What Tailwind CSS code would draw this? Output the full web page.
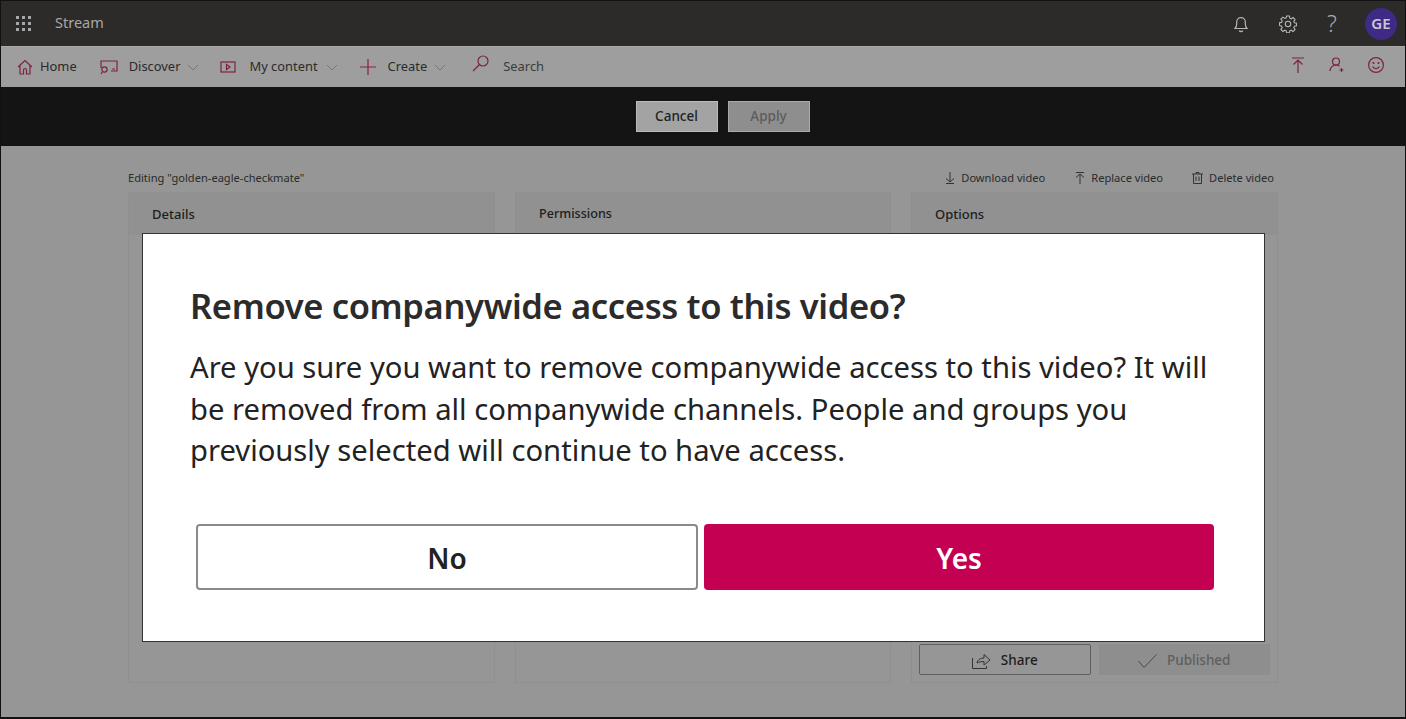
<!DOCTYPE html>
<html lang="en">
<head>
    <meta charset="UTF-8">
    <title>Stream</title>
    <script src="https://cdn.jsdelivr.net/npm/@tailwindcss/browser@4"></script>
</head>
<body class="bg-[#969696]">
<div class="relative w-[1406px] h-[719px] overflow-hidden border border-[#111] border-b-2 font-['Noto_Sans',sans-serif] flex flex-col">

    <!-- top bar -->
    <header class="h-[45px] shrink-0 bg-[#2c2b2a] flex items-center text-[#a8a8a8]">
        <svg class="ml-[15px] -mt-[2px] w-4 h-4" viewBox="0 0 16 16" fill="#a8a8a8">
            <rect x="0" y="1" width="3" height="3"/><rect x="6" y="1" width="3" height="3"/><rect x="12" y="1" width="3" height="3"/>
            <rect x="0" y="7" width="3" height="3"/><rect x="6" y="7" width="3" height="3"/><rect x="12" y="7" width="3" height="3"/>
            <rect x="0" y="13" width="3" height="3"/><rect x="6" y="13" width="3" height="3"/><rect x="12" y="13" width="3" height="3"/>
        </svg>
        <span class="ml-[23px] -mt-[2px] text-[14.5px]">Stream</span>
        <div class="ml-auto flex items-center">
            <svg class="w-4 h-[18px] -ml-[1px]" viewBox="0 0 16 18" fill="none" stroke="#b5b5b5" stroke-width="1.2"><path d="M2 13.5h12c-1.2-1.3-1.7-2.5-1.7-4.5V7a4.3 4.3 0 0 0-8.6 0v2c0 2-.5 3.2-1.7 4.5z"/><path d="M6.3 15.5a1.800 1.800 0 0 0 3.400 0"/></svg>
            <svg class="ml-[30px] w-[18px] h-[18px]" viewBox="0 0 18 18" fill="none" stroke="#b5b5b5" stroke-width="1.1"><circle cx="9" cy="9" r="2.7"/><path d="M7.6 1h2.8l.4 2.2 1.4.6 1.900-1.300 2 2-1.300 1.900.6 1.400 2.100.4v2.600l-2.100.4-.6 1.400 1.300 1.900-2 2-1.900-1.300-1.400.6-.4 2.100H7.600l-.4-2.100-1.400-.6-1.900 1.300-2-2 1.300-1.900-.6-1.400L.5 10.400V7.800l2.100-.4.6-1.400-1.300-1.900 2-2 1.900 1.300 1.400-.6z"/></svg>
            <span class="ml-[28px] w-[14px] text-center text-[23px] leading-none font-light text-[#a8a8a8]">?</span>
            <span class="ml-[26px] mr-[8px] w-8 h-8 rounded-full bg-[#3f2a86] text-[#c9c6d8] text-[15px] font-semibold flex items-center justify-center">GE</span>
        </div>
    </header>

    <!-- nav -->
    <nav class="h-[41px] shrink-0 bg-[#9e9e9e] border-t border-[#aaa] flex items-center text-[12.9px] text-[#2b2b2b]">
        <svg class="ml-[16px] w-4 h-4" viewBox="0 0 16 16" fill="none" stroke="#7c2343" stroke-width="1.2"><path d="M1 8l7-6.5L15 8M3 6.5V15h3.5v-4a1.500 1.500 0 0 1 3 0v4H13V6.500"/></svg>
        <span class="ml-[7px]">Home</span>
        <svg class="ml-[23px] w-[18px] h-4" viewBox="0 0 18 16" fill="none" stroke="#7c2343" stroke-width="1.2"><path d="M1 9V2h16v10h-6M12 10h3"/><circle cx="4.500" cy="10.500" r="2.600"/><path d="M2.500 12.500L1 15"/></svg>
        <span class="ml-[11px]">Discover</span>
        <svg class="ml-[7px] w-3 h-3" viewBox="0 0 12 12" fill="none" stroke="#777"><path d="M1 4l5 5 5-5"/></svg>
        <svg class="ml-[21px] w-4 h-3" viewBox="0 0 16 12" fill="none" stroke="#7c2343" stroke-width="1.2"><rect x="1" y="1" width="14" height="10"/><path d="M6.500 3.500v5l3.500-2.500z"/></svg>
        <span class="ml-[13px]">My content</span>
        <svg class="ml-[8px] w-3 h-3" viewBox="0 0 12 12" fill="none" stroke="#777"><path d="M1 4l5 5 5-5"/></svg>
        <svg class="ml-[22px] w-[16px] h-[16px]" viewBox="0 0 16 16" fill="none" stroke="#8c1f45" stroke-width="1.2"><path d="M8 0v16M0 8h16"/></svg>
        <span class="ml-[12px]">Create</span>
        <svg class="ml-[7px] w-3 h-3" viewBox="0 0 12 12" fill="none" stroke="#777"><path d="M1 4l5 5 5-5"/></svg>
        <svg class="ml-[26px] -mt-[7px] w-[17px] h-[17px]" viewBox="0 0 17 17" fill="none" stroke="#7c2343" stroke-width="1.2"><circle cx="11" cy="6" r="5"/><path d="M7.500 9.500L1 16"/></svg>
        <span class="ml-[14px] text-[#3b3b3b]">Search</span>
        <div class="ml-auto flex items-center -mt-[5px]">
            <svg class="w-3 h-4" viewBox="0 0 12 16" fill="none" stroke="#7c2343" stroke-width="1.2"><path d="M0 1h12M6 16V3M1.500 7.500L6 3l4.500 4.500"/></svg>
            <svg class="ml-[25px] w-4 h-4" viewBox="0 0 16 16" fill="none" stroke="#7c2343" stroke-width="1.2"><circle cx="7" cy="4.500" r="3.500"/><path d="M1 14c0-3 2.500-6 6-6 1.500 0 2.500.5 3.500 1.300M12.500 11v4M10.500 13h4"/></svg>
            <svg class="ml-[23px] mr-[21px] w-4 h-4" viewBox="0 0 16 16" fill="none" stroke="#7c2343" stroke-width="1.2"><circle cx="8" cy="8" r="7.400"/><circle cx="5.500" cy="6" r=".5"/><circle cx="10.500" cy="6" r=".5"/><path d="M4.500 9.500c1.500 2.800 5.500 2.800 7 0"/></svg>
        </div>
    </nav>

    <!-- action bar -->
    <div class="h-[59px] shrink-0 bg-[#141414] flex items-center justify-center gap-[10px] pl-[40px] text-[13.5px] font-medium">
        <button class="w-[82px] h-[31px] bg-[#a3a3a3] text-[#222] border border-[#bbb] ml-[-1px]">Cancel</button>
        <button class="w-[82px] h-[31px] bg-[#8e8e8e] text-[#5b5b5b] border border-[#aaa]">Apply</button>
    </div>

    <!-- editor -->
    <main class="grow bg-[#969696] px-[127px] pt-[21px]">
        <div class="h-[22px] flex items-center justify-between text-[11.1px] text-[#2a2a2a]">
            <span>Editing "golden-eagle-checkmate"</span>
            <div class="flex items-center mr-[4px]">
                <svg class="w-[10px] h-3 mr-[6px]" viewBox="0 0 10 12" fill="none" stroke="#333"><path d="M5 0v10M1 6.500L5 10l4-3.500M1 11.500h8"/></svg>
                <span>Download video</span>
                <svg class="ml-[30px] w-[10px] h-3 mr-[6px]" viewBox="0 0 10 12" fill="none" stroke="#333"><path d="M1 .5h8M5 12V2M1 5.500L5 2l4 3.500"/></svg>
                <span>Replace video</span>
                <svg class="ml-[29px] w-[11px] h-3 mr-[6px]" viewBox="0 0 11 12" fill="none" stroke="#333"><path d="M0 2h11M4 2V.5h3V2M1.500 2v9.500h8V2M4 4.500v4.500M7 4.500v4.500"/></svg>
                <span>Delete video</span>
            </div>
        </div>
        <div class="mt-[3px] grid grid-cols-[367px_376px_367px] gap-[20px] h-[491px]">
            <section class="border border-[#8f8f8f]">
                <h3 class="h-[42px] px-[23px] bg-[#919191] text-[13px] font-medium text-[#1d1d1d] leading-[42px]">Details</h3>
            </section>
            <section class="border border-[#8f8f8f]">
                <h3 class="h-[42px] px-[23px] bg-[#919191] text-[12.6px] font-medium text-[#1d1d1d] leading-[42px]">Permissions</h3>
            </section>
            <section class="border border-[#8f8f8f] flex flex-col">
                <h3 class="h-[42px] px-[23px] bg-[#919191] text-[13px] font-medium text-[#1d1d1d] leading-[42px]">Options</h3>
                <div class="mt-auto mb-[7px] mx-[7px] flex gap-[8px]">
                    <button class="w-[172px] h-[31px] pt-[2px] border border-[#5f5f5f] rounded-[2px] flex items-center justify-center text-[13.500px] font-medium text-[#1d1d1d]">
                        <svg class="w-[19px] h-[17px] mr-[10px]" viewBox="0 0 19 17" fill="none" stroke="#333"><path d="M.5 6v10.500h14V14M5 11c.5-3 3-5 7-5V2.500l6 5.500-6 5v-3.500c-3 0-5 .5-7 1.500z"/></svg>
                        Share
                    </button>
                    <button class="w-[172px] h-[31px] pt-[2px] bg-[#8e8e8e] flex items-center justify-center text-[13.500px] font-medium text-[#5f5f5f]">
                        <svg class="w-[19px] h-[14px] mr-[10px]" viewBox="0 0 19 14" fill="none" stroke="#4a4a4a"><path d="M.5 7l5.500 6.500L18.500.5"/></svg>
                        Published
                    </button>
                </div>
            </section>
        </div>
    </main>

    <!-- modal -->
    <div class="absolute left-[141px] top-[232px] w-[1123px] h-[409px] bg-white border border-[#333] pl-[47px]">
        <h2 class="mt-[48px] text-[34.500px] leading-[48px] font-semibold text-[#2b2b2b] tracking-[-0.35px]">Remove companywide access to this video?</h2>
        <p class="mt-[17px] w-[1040px] text-[29.200px] leading-[41.500px] text-[#222]">Are you sure you want to remove companywide access to this video? It will be removed from all companywide channels. People and groups you previously selected will continue to have access.</p>
        <div class="mt-[52px] ml-[6px] flex gap-[6px]">
            <button class="w-[502px] h-[66px] pt-[2px] bg-white border-2 border-[#8a8a8a] rounded-[4px] text-[28px] font-semibold text-[#222]">No</button>
            <button class="w-[510px] h-[66px] pt-[2px] bg-[#c30052] rounded-[4px] text-[28px] font-semibold text-white">Yes</button>
        </div>
    </div>
</div>
</body>
</html>
